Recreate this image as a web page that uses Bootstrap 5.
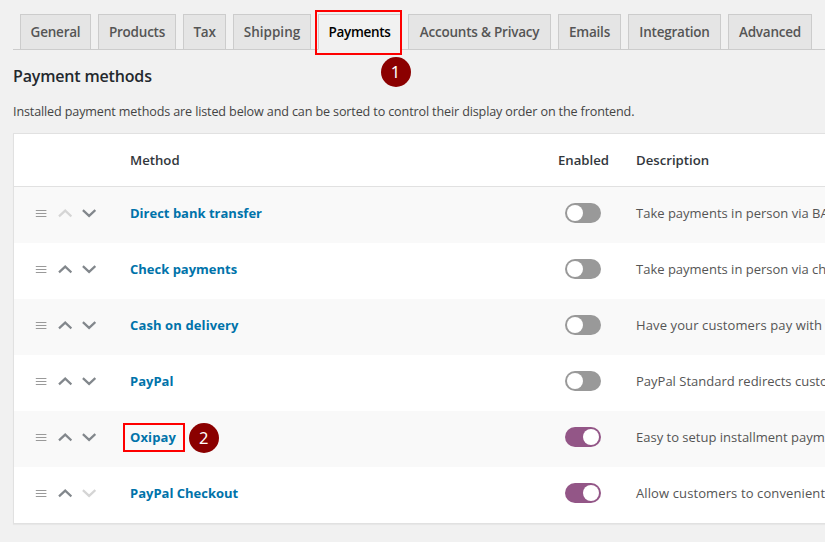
<!DOCTYPE html>
<html lang="en">
<head>
<meta charset="utf-8">
<meta name="viewport" content="width=device-width, initial-scale=1">
<title>Payment methods</title>
<link rel="stylesheet" href="https://cdn.jsdelivr.net/npm/bootstrap@5.3.0/dist/css/bootstrap.min.css">
<style>
body{background:#f1f1f1;color:#444;font:13px/20px "Open Sans","Noto Sans",sans-serif;width:825px;height:542px}
.settings{padding:14px 0 0 13px}
.tabs{height:36px;padding-left:7px;gap:7px;border-bottom:1px solid #ccc}
.tabs .nav-link{height:36px;padding:0;border:1px solid #ccc;border-radius:0;background:#e5e5e5;color:#555;font-size:13.5px;font-weight:600;line-height:35px;letter-spacing:-.22px;text-align:center;white-space:nowrap}
.tabs .nav-link.active{position:relative;background:#f1f1f1;border-bottom-color:#f1f1f1;color:#000;letter-spacing:-.32px}
.tabs .nav-link.wide{letter-spacing:0}
.w43{width:43px}.w63{width:63px}.w71{width:71px}.w78{width:78px}.w83{width:83px}.w84{width:84px}.w93{width:93px}.w143{width:143px}
.outline{position:absolute;border:2px solid #fe0000;pointer-events:none}
.outline-tab{left:-4px;top:-5px;width:87px;height:45px}
.outline-name{left:-7px;top:-4px;width:62px;height:29px}
.step{position:absolute;width:30px;height:30px;background:#8b0000;color:#fff;font:16.5px/30px "Noto Sans","Open Sans",sans-serif;letter-spacing:0;text-align:center}
.step-tab{left:61.5px;top:41.5px}
.step-name{left:58.7px;top:-3.6px}
h2{font-size:16px;line-height:22px;font-weight:600;letter-spacing:-.17px;color:#23282d;margin:15px 0 0}
.intro{margin:15px 0 0;font-size:12.6px;letter-spacing:-.14px;white-space:nowrap}
.methods{margin-top:11px;border:1px solid #e1e1e1;border-right:0;background:#fff;box-shadow:0 1px 1px rgba(0,0,0,.04)}
.line{display:grid;grid-template-columns:116px 419px 69px 1fr;height:56px;padding-bottom:4px;align-items:center;white-space:nowrap}
.line:nth-child(even){background:#f9f9f9}
.line.heading{height:53px;padding-bottom:0;border-bottom:1px solid #e1e1e1;color:#32373c;font-size:13.2px;font-weight:600}
.sort{padding-left:21px}
.arrow{color:#82878c;margin-left:10.5px}
.arrow + .arrow{margin-left:10px}
.arrow.off{color:#d5d5d5}
.method-name{color:#0073aa;font-weight:700;text-decoration:none}
.n3,.n5{letter-spacing:.12px}
.switch{width:36px;height:20px;padding:2px;background:#999;margin-left:16px}
.switch i{display:block;width:16px;height:16px;background:#fff}
.switch.on{background:#935687}
.switch.on i{margin-left:16px}
.desc{color:#555;padding-left:18px;overflow:hidden}
.spaced{letter-spacing:.11px}
.heading .desc{color:#32373c}
</style>
<script src="https://cdn.jsdelivr.net/npm/bootstrap@5.3.0/dist/js/bootstrap.bundle.min.js"></script>
</head>
<body class="overflow-hidden">
<svg class="d-none" xmlns="http://www.w3.org/2000/svg">
<symbol id="grip" viewBox="0 0 12 10"><path d="M.8 2.5h10.6M.8 5.5h10.6M.8 8.5h10.6" stroke="#999" fill="none"/></symbol>
<symbol id="up" viewBox="0 0 14 10"><path d="M1 8.4 7.2 2.6l6.2 5.8" stroke="currentColor" stroke-width="2.2" fill="none"/></symbol>
<symbol id="down" viewBox="0 0 14 10"><path d="M.9 2.1 7.1 7.9l6.2-5.8" stroke="currentColor" stroke-width="2.2" fill="none"/></symbol>
</svg>
<main class="settings">
<nav class="nav tabs flex-nowrap">
<a class="nav-link w71" href="#">General</a>
<a class="nav-link w78" href="#">Products</a>
<a class="nav-link w43" href="#">Tax</a>
<a class="nav-link wide w78" href="#">Shipping</a>
<a class="nav-link active w83" href="#">Payments<span class="outline outline-tab"></span><span class="step step-tab rounded-circle">1</span></a>
<a class="nav-link w143" href="#">Accounts &amp; Privacy</a>
<a class="nav-link w63" href="#">Emails</a>
<a class="nav-link w93" href="#">Integration</a>
<a class="nav-link w84" href="#">Advanced</a>
</nav>
<h2>Payment methods</h2>
<p class="intro">Installed payment methods are listed below and can be sorted to control their display order on the frontend.</p>
<section class="methods">
<div class="line heading"><span></span><span>Method</span><span class="text-center">Enabled</span><span class="desc">Description</span></div>
<div class="line"><div class="sort d-flex"><svg width="12" height="10"><use href="#grip"/></svg><svg class="arrow off" width="14" height="10"><use href="#up"/></svg><svg class="arrow" width="14" height="10"><use href="#down"/></svg></div><div><a class="method-name" href="#">Direct bank transfer</a></div><div class="switch rounded-pill"><i class="rounded-circle"></i></div><div class="desc">Take payments in person via BA</div></div>
<div class="line"><div class="sort d-flex"><svg width="12" height="10"><use href="#grip"/></svg><svg class="arrow" width="14" height="10"><use href="#up"/></svg><svg class="arrow" width="14" height="10"><use href="#down"/></svg></div><div><a class="method-name" href="#">Check payments</a></div><div class="switch rounded-pill"><i class="rounded-circle"></i></div><div class="desc">Take payments in person via ch</div></div>
<div class="line"><div class="sort d-flex"><svg width="12" height="10"><use href="#grip"/></svg><svg class="arrow" width="14" height="10"><use href="#up"/></svg><svg class="arrow" width="14" height="10"><use href="#down"/></svg></div><div><a class="method-name n3" href="#">Cash on delivery</a></div><div class="switch rounded-pill"><i class="rounded-circle"></i></div><div class="desc spaced">Have your customers pay with</div></div>
<div class="line"><div class="sort d-flex"><svg width="12" height="10"><use href="#grip"/></svg><svg class="arrow" width="14" height="10"><use href="#up"/></svg><svg class="arrow" width="14" height="10"><use href="#down"/></svg></div><div><a class="method-name" href="#">PayPal</a></div><div class="switch rounded-pill"><i class="rounded-circle"></i></div><div class="desc">PayPal Standard redirects custo</div></div>
<div class="line"><div class="sort d-flex"><svg width="12" height="10"><use href="#grip"/></svg><svg class="arrow" width="14" height="10"><use href="#up"/></svg><svg class="arrow" width="14" height="10"><use href="#down"/></svg></div><div class="position-relative"><a class="method-name n5" href="#">Oxipay</a><span class="outline outline-name"></span><span class="step step-name rounded-circle">2</span></div><div class="switch on rounded-pill"><i class="rounded-circle"></i></div><div class="desc">Easy to setup installment paym</div></div>
<div class="line"><div class="sort d-flex"><svg width="12" height="10"><use href="#grip"/></svg><svg class="arrow" width="14" height="10"><use href="#up"/></svg><svg class="arrow off" width="14" height="10"><use href="#down"/></svg></div><div><a class="method-name" href="#">PayPal Checkout</a></div><div class="switch on rounded-pill"><i class="rounded-circle"></i></div><div class="desc spaced">Allow customers to convenient</div></div>
</section>
</main>
</body>
</html>
